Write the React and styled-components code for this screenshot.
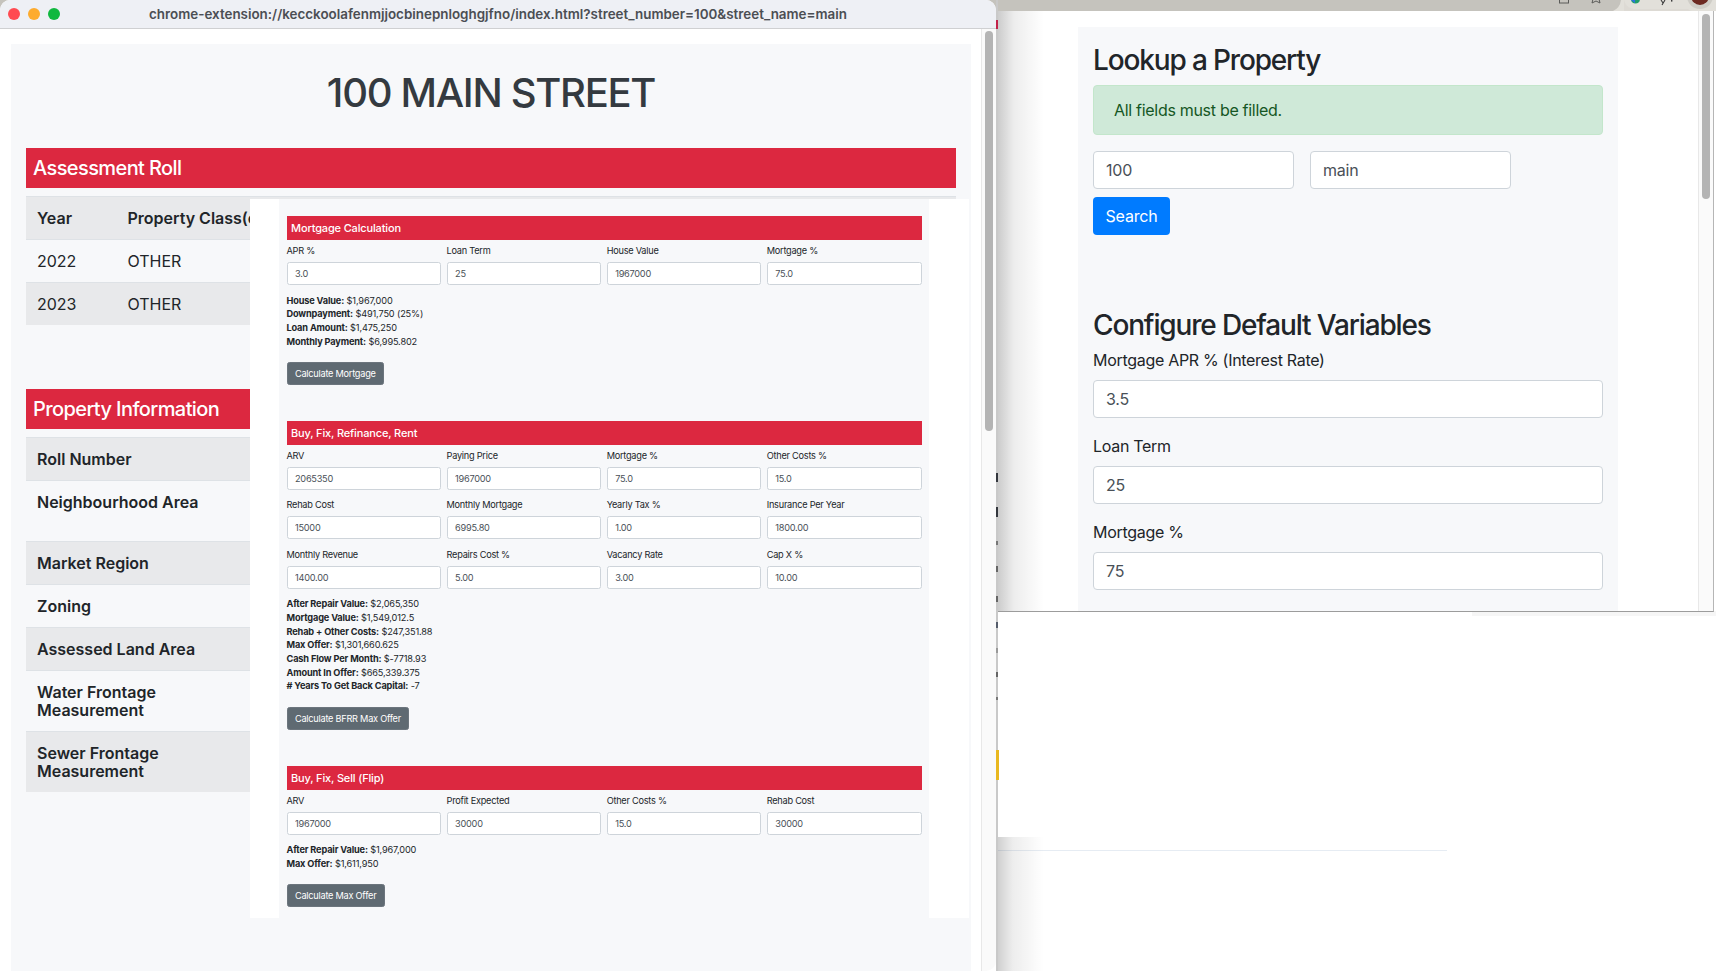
import React from "react";
import styled, { createGlobalStyle } from "styled-components";

const Global = createGlobalStyle`
  html, body { margin: 0; padding: 0; background: #fff; overflow: hidden; }
  * { box-sizing: border-box; }
  body { font-family: Inter, "Liberation Sans", sans-serif; color: #212529; }
`;

const Desktop = styled.div`
  position: relative;
  width: 1716px;
  height: 971px;
  overflow: hidden;
  background: #fff;
`;
const BrowserStrip = styled.div`
  height: 11px;
  background: #c5c3bd;
  display: flex;
  justify-content: flex-end;
`;
const BackRule = styled.div`
  margin: 839px 0 0 996px;
  width: 451px;
  height: 1px;
  background: #e6ecf3;
`;
const BackShade = styled.div`
  position: absolute;
  left: 996px;
  top: 837px;
  width: 48px;
  bottom: 0;
  background: linear-gradient(90deg, rgba(0,0,0,.2), rgba(0,0,0,.07) 35%, rgba(0,0,0,0));
`;
const UnderShade = styled.div`
  position: absolute;
  left: 1472px;
  top: 611px;
  right: 0;
  height: 5px;
  background: #f6f6f6;
`;
const Residue = styled.svg`
  position: absolute;
  left: 996px;
  top: 0;
`;

const Win = styled.div`
  position: absolute;
  display: flex;
  flex-direction: column;
  overflow: hidden;
  background: #fff;
`;
const MainWin = styled(Win)`
  left: 0;
  top: 0;
  width: 996px;
  height: 971px;
  border-radius: 10px;
  z-index: 2;
`;
const SideWin = styled(Win)`
  left: 998px;
  top: 11px;
  width: 716px;
  height: 601px;
  flex-direction: row;
  border-bottom: 1px solid #9c9c9c;
  border-right: 1px solid #b5b5b5;
  z-index: 1;
`;
const TitleBar = styled.div`
  position: relative;
  height: 29px;
  flex: none;
  background: #eef0f5;
  border-bottom: 1px solid #cfd0d2;
  display: flex;
  align-items: center;
  justify-content: center;
`;
const Lights = styled.div`
  position: absolute;
  left: 8px;
  top: 8px;
  display: flex;
  gap: 8px;
`;
const Light = styled.span`
  width: 12px;
  height: 12px;
  border-radius: 50%;
  background: ${(p) => p.$c};
`;
const TitleText = styled.div`
  font-size: 13.4px;
  font-weight: 600;
  color: #4b4e53;
  margin-top: -1px;
`;
const WinBody = styled.div`
  flex: 1;
  min-height: 0;
  display: flex;
`;
const ScrollTrack = styled.div`
  flex: none;
  width: 15px;
  background: #fafafa;
  border-left: 1px solid #e8e8e8;
  padding: ${(p) => p.$top}px 3px 0 3px;
`;
const ScrollThumb = styled.div`
  width: 8px;
  height: ${(p) => p.$h}px;
  border-radius: 4px;
  background: #b4b4b4;
`;

const MainContent = styled.div`
  flex: 1;
  min-width: 0;
  padding: 15px 10px 0 11px;
`;
const Panel = styled.div`
  position: relative;
  height: 100%;
  background: #f7f8fa;
  padding: 25px 15px 0 15px;
`;
const Heading = styled.h1`
  margin: 0 0 31px;
  font-size: 40px;
  line-height: 48px;
  font-weight: 500;
  letter-spacing: -1.3px;
  text-align: center;
  color: #343a40;
`;
const RedBar = styled.div`
  height: 40px;
  padding-left: 7px;
  background: #dc2840;
  color: #fff;
  font-size: 20px;
  line-height: 41px;
  font-weight: 500;
  letter-spacing: -0.6px;
`;
const DataTable = styled.div`
  margin: 8px 0 ${(p) => p.$after || 0}px;
  border-top: 1px solid #dee2e6;
`;
const DataRow = styled.div`
  display: flex;
  padding: 12px 12px 12px 11px;
  line-height: 18px;
  font-size: 16px;
  border-top: 1px solid #dee2e6;
  background: ${(p) => (p.$odd ? "#e8e9eb" : "transparent")};
  &:first-child { border-top: 0; }
`;
const Head = styled.div`
  width: ${(p) => p.$w}px;
  flex: none;
  font-weight: 600;
  white-space: ${(p) => (p.$wrap ? "normal" : "nowrap")};
`;
const Cell = styled.div`
  width: ${(p) => p.$w}px;
  flex: none;
`;

const Embed = styled.div`
  position: absolute;
  left: 239px;
  top: 155px;
  width: 719px;
  height: 719px;
  background: #fff;
  overflow: hidden;
  padding-left: 29px;
`;
const EmbedInner = styled.div`
  width: 650px;
  height: 100%;
  background: #f7f8fa;
  padding: 17px 7.5px 0;
`;
const CalcSection = styled.section`
  margin-bottom: 36px;
`;
const CalcTitle = styled.div`
  height: 24px;
  background: #dc2840;
  color: #fff;
  font-size: 11px;
  line-height: 25px;
  font-weight: 500;
  letter-spacing: -0.15px;
  padding-left: 4.5px;
`;
const FieldGrid = styled.div`
  display: grid;
  grid-template-columns: repeat(4, 1fr);
  column-gap: 5.3px;
  row-gap: 4.4px;
`;
const Field = styled.label`
  display: block;
`;
const FieldLabel = styled.div`
  height: 22px;
  padding-top: 4px;
  font-size: 9.2px;
  line-height: 14px;
  letter-spacing: -0.25px;
  color: #212529;
`;
const TinyInput = styled.input`
  display: block;
  width: 100%;
  height: 23px;
  padding: 0 7.5px;
  border: 1px solid #ced4da;
  border-radius: 2.5px;
  background: #fff;
  font: 400 9.2px Inter, sans-serif;
  letter-spacing: -0.25px;
  color: #495057;
  outline: none;
`;
const Results = styled.div`
  margin-top: 8.5px;
  font-size: 9.2px;
  line-height: 13.7px;
  letter-spacing: -0.15px;
  color: #212529;
  b { font-weight: 700; }
`;
const CalcButton = styled.button`
  display: block;
  margin-top: 13.5px;
  height: 23px;
  padding: 0 7.5px;
  border: 1px solid #6c757d;
  border-radius: 2.5px;
  background: #5f6a72;
  color: #fff;
  font: 400 9.2px Inter, sans-serif;
  letter-spacing: -0.25px;
`;

const SideContent = styled.div`
  position: relative;
  flex: 1;
  min-width: 0;
  padding: 16px 0 0 80px;
  overflow: hidden;
`;
const Shade = styled.div`
  position: absolute;
  left: 0;
  top: 0;
  bottom: 0;
  width: 46px;
  background: linear-gradient(90deg, rgba(0,0,0,.2), rgba(0,0,0,.07) 35%, rgba(0,0,0,0));
`;
const SidePanel = styled.div`
  width: 540px;
  height: 620px;
  background: #f7f8fa;
  padding: 16px 15px 0;
`;
const SideHeading = styled.h2`
  margin: 0;
  font-size: 28px;
  line-height: 34px;
  font-weight: 500;
  letter-spacing: -1.15px;
  color: #212529;
`;
const Alert = styled.div`
  margin-top: 8px;
  height: 50px;
  padding-left: 20px;
  border: 1px solid #c3e6cb;
  border-radius: 4px;
  background: #cfe9d8;
  color: #155724;
  font-size: 16px;
  line-height: 48px;
  letter-spacing: -0.3px;
`;
const SearchRow = styled.div`
  display: flex;
  gap: 16px;
  margin-top: 16px;
`;
const BigInput = styled.input`
  display: block;
  width: ${(p) => p.$w || "100%"};
  height: 38px;
  padding: 0 12px;
  border: 1px solid #ced4da;
  border-radius: 4px;
  background: #fff;
  font: 400 16px Inter, sans-serif;
  letter-spacing: -0.2px;
  color: #495057;
  outline: none;
`;
const SearchButton = styled.button`
  display: block;
  margin-top: 8px;
  width: 77px;
  height: 38px;
  border: 0;
  border-radius: 4px;
  background: #007bff;
  color: #fff;
  font: 400 16px Inter, sans-serif;
  letter-spacing: -0.2px;
`;
const ConfigHeading = styled(SideHeading)`
  margin-top: 73px;
`;
const ConfigLabel = styled.div`
  margin: ${(p) => p.$top}px 0 8px;
  font-size: 16px;
  line-height: 24px;
  letter-spacing: -0.3px;
  color: #212529;
`;

const CalcFields = ({ items }) => (
  <FieldGrid>
    {items.map(([l, v], i) => (
      <Field key={l + i}>
        <FieldLabel>{l}</FieldLabel>
        <TinyInput readOnly value={v} />
      </Field>
    ))}
  </FieldGrid>
);
const CalcResults = ({ items }) => (
  <Results>
    {items.map(([l, v]) => (
      <div key={l}>
        <b>{l}:</b> {v}
      </div>
    ))}
  </Results>
);

const sections = [
  {
    title: "Mortgage Calculation",
    fields: [["APR %", "3.0"], ["Loan Term", "25"], ["House Value", "1967000"], ["Mortgage %", "75.0"]],
    results: [
      ["House Value", "$1,967,000"],
      ["Downpayment", "$491,750 (25%)"],
      ["Loan Amount", "$1,475,250"],
      ["Monthly Payment", "$6,995.802"],
    ],
    button: "Calculate Mortgage",
  },
  {
    title: "Buy, Fix, Refinance, Rent",
    fields: [
      ["ARV", "2065350"], ["Paying Price", "1967000"], ["Mortgage %", "75.0"], ["Other Costs %", "15.0"],
      ["Rehab Cost", "15000"], ["Monthly Mortgage", "6995.80"], ["Yearly Tax %", "1.00"], ["Insurance Per Year", "1800.00"],
      ["Monthly Revenue", "1400.00"], ["Repairs Cost %", "5.00"], ["Vacancy Rate", "3.00"], ["Cap X %", "10.00"],
    ],
    results: [
      ["After Repair Value", "$2,065,350"],
      ["Mortgage Value", "$1,549,012.5"],
      ["Rehab + Other Costs", "$247,351.88"],
      ["Max Offer", "$1,301,660.625"],
      ["Cash Flow Per Month", "$-7718.93"],
      ["Amount In Offer", "$665,339.375"],
      ["# Years To Get Back Capital", "-7"],
    ],
    button: "Calculate BFRR Max Offer",
  },
  {
    title: "Buy, Fix, Sell (Flip)",
    fields: [["ARV", "1967000"], ["Profit Expected", "30000"], ["Other Costs %", "15.0"], ["Rehab Cost", "30000"]],
    results: [
      ["After Repair Value", "$1,967,000"],
      ["Max Offer", "$1,611,950"],
    ],
    button: "Calculate Max Offer",
  },
];

const propertyRows = [
  <>Roll Number</>,
  <>Neighbourhood Area<br /><br /></>,
  <>Market Region</>,
  <>Zoning</>,
  <>Assessed Land Area</>,
  <>Water Frontage Measurement</>,
  <>Sewer Frontage Measurement</>,
];

const ToolbarBits = () => (
  <svg width="216" height="11" viewBox="0 0 216 11">
    <path d="M113 0h103v11H113a14 14 0 0 0 8-11z" fill="#e2e0da" />
    <path d="M124 0a12 12 0 0 0 10 9h54a14 14 0 0 0 12 2h-76z" fill="#d8d6d0" opacity=".55" />
    <rect x="59.5" y="-4" width="9" height="7" fill="none" stroke="#5a5a58" strokeWidth="1" />
    <path d="M92 3l4-2 4 2-1-4h-6z" fill="none" stroke="#5a5a58" strokeWidth="1" />
    <circle cx="135.5" cy="-1" r="4.5" fill="#1f9d6b" />
    <path d="M131 0h4v3z" fill="#2f6fe0" />
    <path d="M161 0l2 3M165 0l-3 5" stroke="#3a3a3a" strokeWidth="1.1" fill="none" />
    <rect x="171" y="0" width="1.4" height="1.6" fill="#3a3a3a" />
    <circle cx="200" cy="-4" r="13" fill="#cfcdc7" />
    <circle cx="200" cy="-4" r="9" fill="#6d2a22" />
  </svg>
);

const residueBits = [
  [473, 9, "#33363d"], [507, 10, "#33363d"], [541, 4, "#777"], [566, 6, "#666"], [596, 6, "#666"],
  [622, 6, "#555c6b"], [648, 5, "#999"], [672, 5, "#666"], [697, 3, "#777"],
];

export default function App() {
  return (
    <Desktop>
      <Global />
      <BrowserStrip>
        <ToolbarBits />
      </BrowserStrip>
      <BackRule />
      <BackShade />
      <UnderShade />
      <Residue width="4" height="971" viewBox="0 0 4 971">
        <rect x="0" y="0" width="2" height="971" fill="#c9c9c9" />
        <rect x="0" y="20" width="2" height="9" fill="#c2224a" />
        {residueBits.map(([y, h, c]) => (
          <rect key={y} x="0" y={y} width="2" height={h} fill={c} />
        ))}
        <rect x="0" y="750" width="3" height="30" fill="#e9b820" />
      </Residue>

      <SideWin>
        <SideContent>
          <Shade />
          <SidePanel>
            <SideHeading>Lookup a Property</SideHeading>
            <Alert>All fields must be filled.</Alert>
            <SearchRow>
              <BigInput $w="201px" readOnly value="100" />
              <BigInput $w="201px" readOnly value="main" />
            </SearchRow>
            <SearchButton>Search</SearchButton>
            <ConfigHeading>Configure Default Variables</ConfigHeading>
            <ConfigLabel $top={6}>Mortgage APR % (Interest Rate)</ConfigLabel>
            <BigInput readOnly value="3.5" />
            <ConfigLabel $top={16}>Loan Term</ConfigLabel>
            <BigInput readOnly value="25" />
            <ConfigLabel $top={16}>Mortgage %</ConfigLabel>
            <BigInput readOnly value="75" />
          </SidePanel>
        </SideContent>
        <ScrollTrack $top={3}>
          <ScrollThumb $h={185} />
        </ScrollTrack>
      </SideWin>

      <MainWin>
        <TitleBar>
          <Lights>
            <Light $c="#ff4b52" />
            <Light $c="#fdab2e" />
            <Light $c="#10b83f" />
          </Lights>
          <TitleText>chrome-extension://kecckoolafenmjjocbinepnloghgjfno/index.html?street_number=100&amp;street_name=main</TitleText>
        </TitleBar>
        <WinBody>
          <MainContent>
            <Panel>
              <Heading>100 MAIN STREET</Heading>
              <RedBar>Assessment Roll</RedBar>
              <DataTable $after={64}>
                <DataRow $odd>
                  <Head $w={90.5}>Year</Head>
                  <Head $w={200}>Property Class(es)</Head>
                </DataRow>
                <DataRow>
                  <Cell $w={90.5}>2022</Cell>
                  <Cell $w={200}>OTHER</Cell>
                </DataRow>
                <DataRow $odd>
                  <Cell $w={90.5}>2023</Cell>
                  <Cell $w={200}>OTHER</Cell>
                </DataRow>
              </DataTable>
              <RedBar>Property Information</RedBar>
              <DataTable>
                {propertyRows.map((label, i) => (
                  <DataRow key={i} $odd={i % 2 === 0}>
                    <Head $w={170} $wrap>{label}</Head>
                  </DataRow>
                ))}
              </DataTable>
              <Embed>
                <EmbedInner>
                  {sections.map((s) => (
                    <CalcSection key={s.title}>
                      <CalcTitle>{s.title}</CalcTitle>
                      <CalcFields items={s.fields} />
                      <CalcResults items={s.results} />
                      <CalcButton>{s.button}</CalcButton>
                    </CalcSection>
                  ))}
                </EmbedInner>
              </Embed>
            </Panel>
          </MainContent>
          <ScrollTrack $top={2}>
            <ScrollThumb $h={400} />
          </ScrollTrack>
        </WinBody>
      </MainWin>
    </Desktop>
  );
}
